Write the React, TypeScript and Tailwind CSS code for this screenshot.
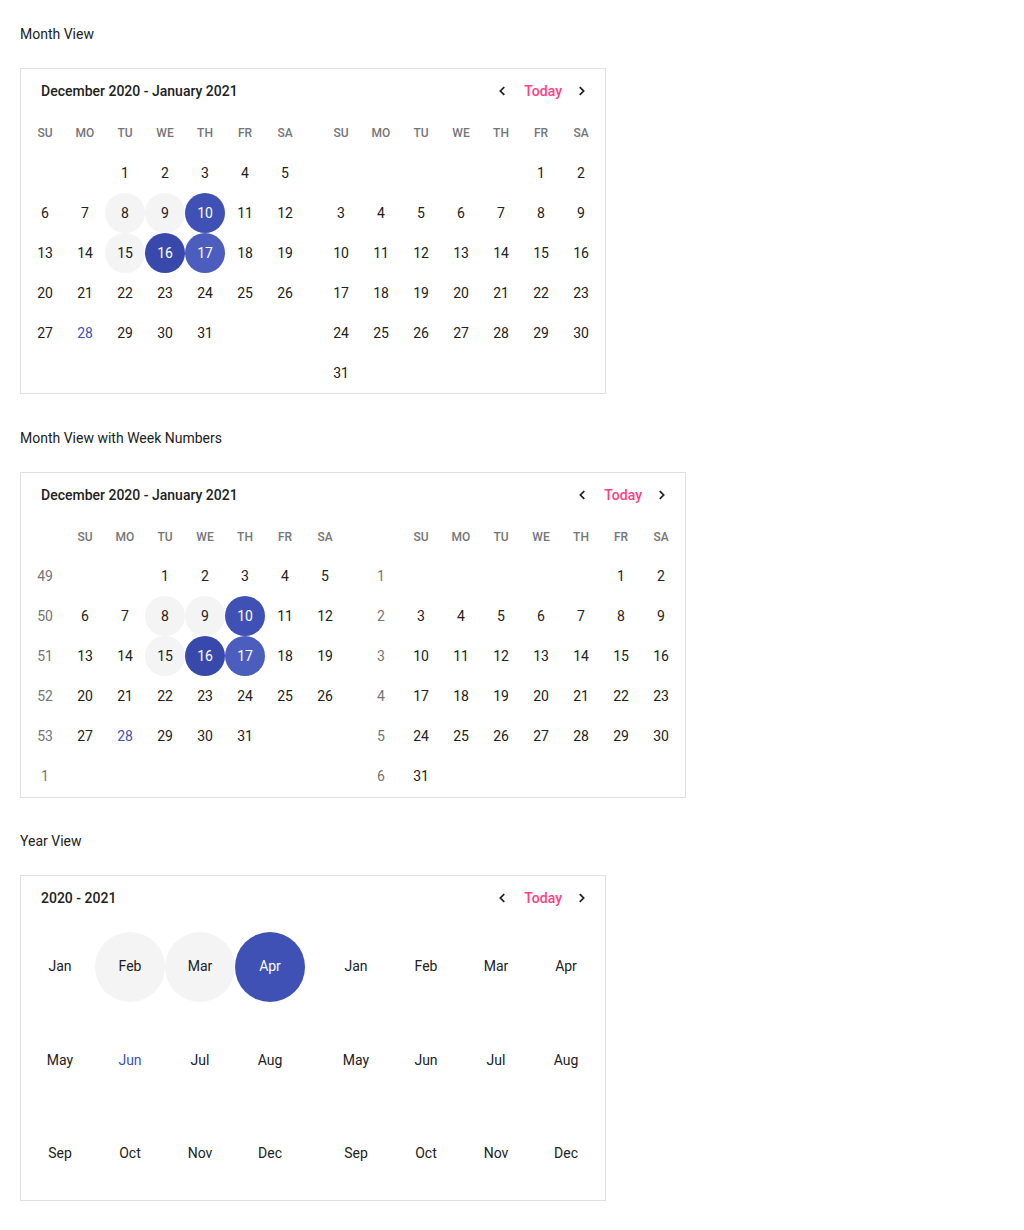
import React from "react";

type Month = { start: number; days: number; weeks?: number[]; marked?: boolean };

const months: Month[] = [
  { start: 2, days: 31, weeks: [49, 50, 51, 52, 53, 1], marked: true },
  { start: 5, days: 31, weeks: [1, 2, 3, 4, 5, 6] },
];

const weekdays = ["SU", "MO", "TU", "WE", "TH", "FR", "SA"];
const monthNames = ["Jan", "Feb", "Mar", "Apr", "May", "Jun", "Jul", "Aug", "Sep", "Oct", "Nov", "Dec"];

const dayStyle: Record<number, string> = {
  8: "bg-[#f4f4f4] text-[#212121]",
  9: "bg-[#f4f4f4] text-[#212121]",
  15: "bg-[#f4f4f4] text-[#212121]",
  10: "bg-[#3f51b5] text-white",
  16: "bg-[#3949ab] text-white",
  17: "bg-[#4b5dbd] text-white",
  28: "text-[#3f51b5]",
};

const Chevron = ({ dir }: { dir: "left" | "right" }) => (
  <svg width="16" height="16" viewBox="0 0 24 24" fill="none" stroke="#212121" strokeWidth="2.6" strokeLinecap="square">
    {dir === "left" ? <path d="M14.5 7l-5 5 5 5" /> : <path d="M9.5 7l5 5-5 5" />}
  </svg>
);

const Header = ({ title }: { title: string }) => (
  <div className="flex h-[44px] items-center justify-between pl-[20px] pr-[11px]">
    <span className="text-[14px] font-medium text-[#212121]">{title}</span>
    <div className="flex items-center">
      <button className="flex h-[24px] w-[24px] items-center justify-center">
        <Chevron dir="left" />
      </button>
      <span className="ml-[10px] mr-[8px] text-[14px] font-medium text-[#ff4081]">Today</span>
      <button className="flex h-[24px] w-[24px] items-center justify-center">
        <Chevron dir="right" />
      </button>
    </div>
  </div>
);

const MonthGrid = ({
  month,
  showWeeks,
  rows,
}: {
  month: Month;
  showWeeks: boolean;
  rows: number;
}) => {
  const cells: (number | null)[] = [];
  for (let i = 0; i < month.start; i++) cells.push(null);
  for (let d = 1; d <= month.days; d++) cells.push(d);
  while (cells.length < rows * 7) cells.push(null);
  const weekRows = Array.from({ length: rows }, (_, r) => cells.slice(r * 7, r * 7 + 7));

  return (
    <div className="flex flex-col">
      <div className={`flex items-center ${showWeeks ? "h-[39px]" : "h-[40px]"}`}>
        {showWeeks && <div className="w-[40px]" />}
        {weekdays.map((w) => (
          <div key={w} className="w-[40px] text-center text-[12px] font-medium text-[#757575]">
            {w}
          </div>
        ))}
      </div>
      {weekRows.map((row, r) => (
        <div key={r} className="flex h-[40px] items-center">
          {showWeeks && (
            <div className="w-[40px] text-center text-[14px] text-[#757575]">{month.weeks?.[r]}</div>
          )}
          {row.map((d, i) => (
            <div
              key={i}
              className={`flex h-[40px] w-[40px] items-center justify-center rounded-full text-[14px] ${
                d && month.marked && dayStyle[d] ? dayStyle[d] : "text-[#212121]"
              }`}
            >
              {d}
            </div>
          ))}
        </div>
      ))}
    </div>
  );
};

const YearGrid = ({ highlight }: { highlight: boolean }) => (
  <div className="grid w-[280px] grid-cols-4">
    {monthNames.map((m, i) => {
      let style = "text-[#212121]";
      if (highlight && (i === 1 || i === 2)) style = "bg-[#f4f4f4] text-[#212121]";
      if (highlight && i === 3) style = "bg-[#3f51b5] text-white";
      if (highlight && i === 5) style = "text-[#3f51b5]";
      return (
        <div key={m} className="flex h-[93.4px] items-center justify-center">
          <div className={`flex h-[70px] w-[70px] items-center justify-center rounded-full text-[14px] ${style}`}>
            {m}
          </div>
        </div>
      );
    })}
  </div>
);

const Label = ({ children }: { children: React.ReactNode }) => (
  <div className="mb-[24px] h-[20px] text-[14px] leading-[20px] text-[#212121]">{children}</div>
);

export default function App() {
  return (
    <div className="min-h-[1230px] bg-white px-[20px] pt-[24px] font-['Roboto',sans-serif]">
      <Label>Month View</Label>
      <div className="w-fit border border-[#e0e0e0]">
        <Header title="December 2020 - January 2021" />
        <div className="flex gap-[16px] px-[4px]">
          <MonthGrid month={months[0]} showWeeks={false} rows={5} />
          <MonthGrid month={months[1]} showWeeks={false} rows={6} />
        </div>
      </div>

      <div className="mt-[34px]">
        <Label>Month View with Week Numbers</Label>
      </div>
      <div className="w-fit border border-[#e0e0e0]">
        <Header title="December 2020 - January 2021" />
        <div className="flex gap-[16px] px-[4px] pb-[1px]">
          <MonthGrid month={months[0]} showWeeks rows={6} />
          <MonthGrid month={months[1]} showWeeks rows={6} />
        </div>
      </div>

      <div className="mt-[33px]">
        <Label>Year View</Label>
      </div>
      <div className="w-fit border border-[#e0e0e0]">
        <Header title="2020 - 2021" />
        <div className="flex gap-[16px] px-[4px]">
          <YearGrid highlight />
          <YearGrid highlight={false} />
        </div>
      </div>
    </div>
  );
}
